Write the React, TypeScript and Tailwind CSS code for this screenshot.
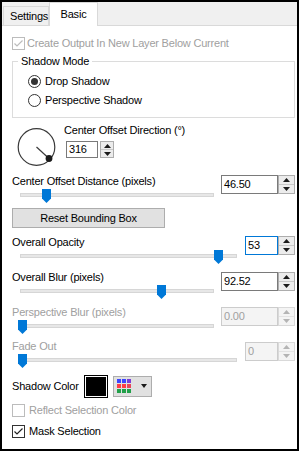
import React from 'react';

const font = "font-['Liberation_Sans',Arial,sans-serif] text-[11px] tracking-[-0.2px] text-black";

function Arrow({ up, disabled }: { up?: boolean; disabled?: boolean }) {
  return (
    <svg width="7" height="4" viewBox="0 0 7 4">
      <polygon points={up ? '3.5,0 7,4 0,4' : '0,0 7,0 3.5,4'} fill={disabled ? '#b4b4b4' : '#1a1a1a'} />
    </svg>
  );
}

function Spin({ value, inputW, btnW = 17, h = 19, gap = 0, disabled, focus }: {
  value: string; inputW: number; btnW?: number; h?: number; gap?: number; disabled?: boolean; focus?: boolean;
}) {
  const border = focus ? 'border-[#0078d7]' : disabled ? 'border-[#cccccc]' : 'border-[#7a7a7a]';
  return (
    <div className="flex" style={{ height: h, gap }}>
      <div
        className={`border ${border} ${disabled ? 'bg-[#f4f4f4] text-[#a0a0a0]' : 'bg-white'} pl-[2px]`}
        style={{ width: inputW, lineHeight: `${h - 2}px` }}
      >
        {value}
      </div>
      <div className={`flex flex-col border ${disabled ? 'border-[#d9d9d9]' : 'border-[#adadad]'}`} style={{ width: btnW }}>
        <div className={`flex-1 flex items-center justify-center border-b ${disabled ? 'border-[#e3e3e3] bg-[#f4f4f4]' : 'border-[#c8c8c8] bg-[#ececec]'}`}>
          <Arrow up disabled={disabled} />
        </div>
        <div className={`flex-1 flex items-center justify-center ${disabled ? 'bg-[#f4f4f4]' : 'bg-[#ececec]'}`}>
          <Arrow disabled={disabled} />
        </div>
      </div>
    </div>
  );
}

function Slider({ trackW, thumb }: { trackW: number; thumb: number }) {
  return (
    <div className="relative ml-[6px] h-[16px]" style={{ width: trackW + 2 }}>
      <div className="ml-[2px] mt-[5px] h-[4px] bg-[#e7e7e7] border border-[#d6d6d6]" style={{ width: trackW }} />
      <svg className="absolute top-[1px]" style={{ left: thumb }} width="9" height="14" viewBox="0 0 9 14">
        <polygon points="0,0 9,0 9,9.5 4.5,14 0,9.5" fill="#0078d7" />
      </svg>
    </div>
  );
}

function SliderRow({ label, disabled, trackW, thumb, spin, spinTop = 1, h = 35 }: {
  label: string; disabled?: boolean; trackW: number; thumb: number; spin: React.ReactNode; spinTop?: number; h?: number;
}) {
  return (
    <div className="flex w-[283px] justify-between" style={{ height: h }}>
      <div className="flex flex-col">
        <div className={`h-[14px] leading-[14px] ${disabled ? 'text-[#a0a0a0]' : ''}`}>{label}</div>
        <Slider trackW={trackW} thumb={thumb} />
      </div>
      <div style={{ marginTop: spinTop }}>{spin}</div>
    </div>
  );
}

function Check({ checked, disabled }: { checked?: boolean; disabled?: boolean }) {
  const c = disabled ? '#bcbcbc' : '#333333';
  return (
    <svg width="13" height="13" viewBox="0 0 13 13" className="shrink-0">
      <rect x="0.5" y="0.5" width="12" height="12" fill="white" stroke={c} />
      {checked && <path d="M2.5 6.5 L5 9 L10.5 3.5" fill="none" stroke={disabled ? '#bcbcbc' : '#222'} strokeWidth="1.2" />}
    </svg>
  );
}

function Radio({ checked, label }: { checked?: boolean; label: string }) {
  return (
    <div className="flex h-[19px] items-center gap-[4px] pl-[15px]">
      <svg width="13" height="13" viewBox="0 0 13 13">
        <circle cx="6.5" cy="6.5" r="6" fill="white" stroke="#333" />
        {checked && <circle cx="6.5" cy="6.5" r="3.5" fill="#333" />}
      </svg>
      <span>{label}</span>
    </div>
  );
}

export default function App() {
  const palette = ['#3c46ff', '#3c46ff', '#7a3cd8', '#ff3c46', '#ff3c46', '#e8465a', '#22a04a', '#22a04a', '#22a04a'];
  return (
    <div className={`w-[304px] h-[453px] bg-white ${font}`}>
      <div className="w-[299px] h-[451px] border-2 border-black flex flex-col bg-white">
        {/* tab strip */}
        <div className="h-[24px] bg-[#f0f0f0] border-b border-[#d9d9d9] flex items-end pl-[1px]">
          <div className="w-[46px] h-[19px] border border-b-0 border-[#d9d9d9] bg-[#f0f0f0] pl-[6px] leading-[18px]">Settings</div>
          <div className="w-[49px] h-[24px] -mb-px bg-white border border-b-0 border-[#d9d9d9] text-center leading-[22px]">Basic</div>
        </div>

        <div className="flex-1 flex flex-col pl-[10px]">
          <div className="mt-[10px] h-[14px] flex items-center gap-[2px] text-[#a0a0a0]">
            <Check checked disabled />
            <span>Create Output In New Layer Below Current</span>
          </div>

          <fieldset className="mt-[4px] w-[283px] h-[64px] border border-[#dcdcdc]">
            <legend className="ml-[5px] px-[3px] h-[14px] leading-[14px]">Shadow Mode</legend>
            <div className="pt-[4px]">
              <Radio checked label="Drop Shadow" />
              <Radio label="Perspective Shadow" />
            </div>
          </fieldset>

          <div className="mt-[5px] h-[43px] flex">
            <svg width="40" height="40" viewBox="0 0 40 40" className="mt-[5px] ml-[5px] shrink-0">
              <circle cx="19.5" cy="19" r="18.3" fill="none" stroke="#3a3a3a" strokeWidth="1.2" />
              <line x1="19.5" y1="19" x2="32" y2="30.5" stroke="#3a3a3a" strokeWidth="1.2" />
              <circle cx="32" cy="30.5" r="3.4" fill="#1a1a1a" />
            </svg>
            <div className="ml-[7px] flex flex-col">
              <div className="h-[14px] leading-[14px]">Center Offset Direction (°)</div>
              <div className="mt-[4px] ml-[2px]">
                <Spin value="316" inputW={32} btnW={14} h={17} gap={2} />
              </div>
            </div>
          </div>

          <div className="mt-[8px]">
            <SliderRow label="Center Offset Distance (pixels)" trackW={194} thumb={24} h={34}
              spin={<Spin value="46.50" inputW={57} />} />
          </div>

          <div className="w-[153px] h-[20px] bg-[#e1e1e1] border border-[#adadad] text-center leading-[18px]">Reset Bounding Box</div>

          <div className="mt-[7px]">
            <SliderRow label="Overall Opacity" trackW={217} thumb={196}
              spin={<Spin value="53" inputW={33} focus />} />
            <SliderRow label="Overall Blur (pixels)" trackW={194} thumb={139} spinTop={2}
              spin={<Spin value="92.52" inputW={57} />} />
            <SliderRow label="Perspective Blur (pixels)" disabled trackW={194} thumb={0} spinTop={2} h={34}
              spin={<Spin value="0.00" inputW={57} disabled />} />
            <SliderRow label="Fade Out" disabled trackW={217} thumb={0} spinTop={3}
              spin={<Spin value="0" inputW={33} disabled />} />
          </div>

          <div className="h-[24px] flex items-center">
            <span className="w-[72px]">Shadow Color</span>
            <div className="w-[24px] h-[23px] border border-black bg-white p-[1px]">
              <div className="w-full h-full bg-black" />
            </div>
            <div className="ml-[5px] w-[39px] h-[21px] bg-[#e1e1e1] border border-[#adadad] flex items-center pl-[3px] pr-[4px]">
              <div className="grid grid-cols-3 gap-[1px] w-[14px]">
                {palette.map((c, i) => (
                  <div key={i} className="w-[4px] h-[4px]" style={{ backgroundColor: c }} />
                ))}
              </div>
              <svg width="6" height="4" viewBox="0 0 6 4" className="ml-auto">
                <polygon points="0,0 6,0 3,4" fill="#1a1a1a" />
              </svg>
            </div>
          </div>

          <div className="mt-[2px] h-[21px] flex items-center gap-[4px] text-[#a0a0a0]">
            <Check disabled />
            <span>Reflect Selection Color</span>
          </div>
          <div className="h-[21px] flex items-center gap-[4px]">
            <Check checked />
            <span>Mask Selection</span>
          </div>
        </div>
      </div>
    </div>
  );
}
